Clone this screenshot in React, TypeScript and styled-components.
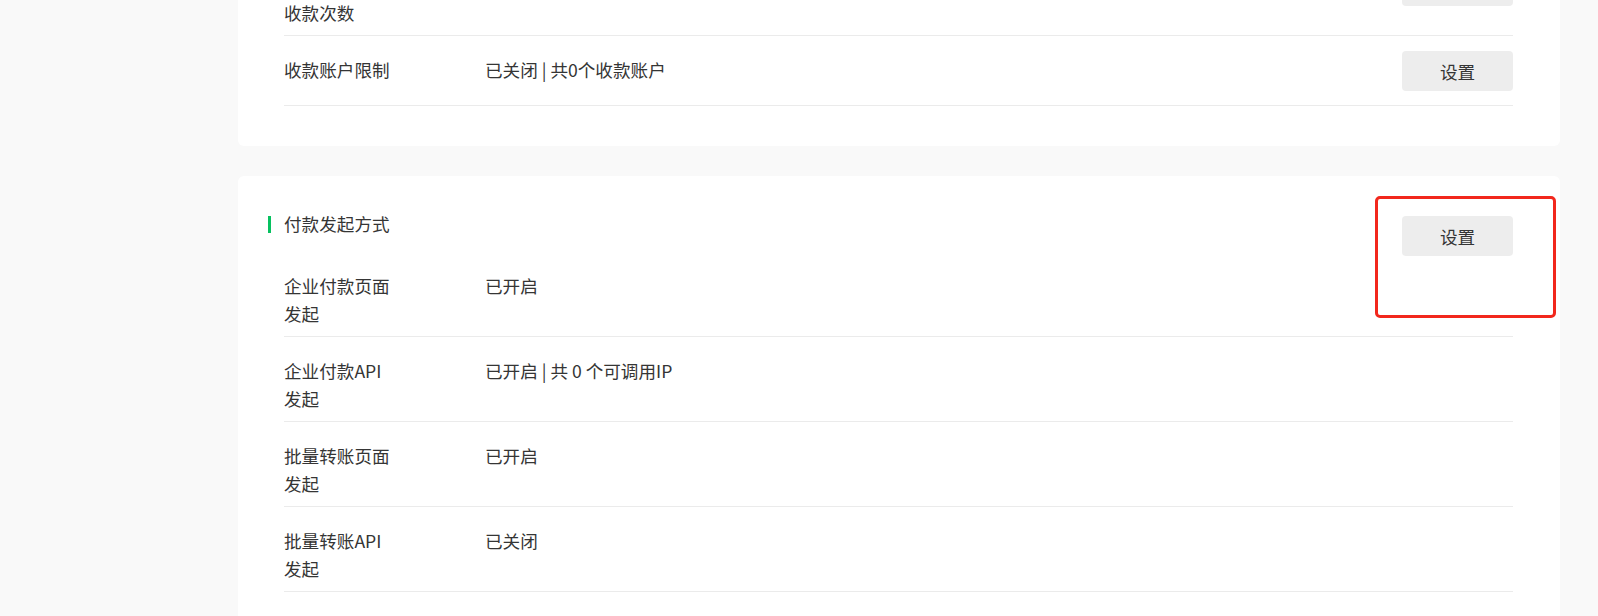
import React from "react";
import styled, { createGlobalStyle } from "styled-components";

const GlobalStyle = createGlobalStyle`
  html, body {
    margin: 0;
    padding: 0;
    background: #f9f9f9;
  }
  body {
    font-family: "Noto Sans CJK SC", "Noto Sans", sans-serif;
    font-size: 17.6px;
    color: #353535;
    overflow: hidden;
  }
`;

const Viewport = styled.div`
  height: 616px;
  overflow: hidden;
`;

// page is scrolled: the first card starts above the window
const Main = styled.main`
  display: flex;
  flex-direction: column;
  gap: 30px;
  margin-top: -49px;
  padding: 0 38px 0 238px;
`;

const Card = styled.section<{ $scrolled?: boolean }>`
  position: relative;
  background: #fff;
  border-radius: 6px;
  padding: ${(p) => (p.$scrolled ? "0" : "34px")} 47px 40px 46px;
`;

const Header = styled.div`
  display: flex;
  justify-content: space-between;
  align-items: flex-start;
  height: 42px;
`;

const Title = styled.h3`
  display: flex;
  align-items: center;
  gap: 13px;
  margin: 0 0 0 -16px;
  font-size: 17.6px;
  font-weight: normal;
  line-height: 28px;

  &::before {
    content: "";
    width: 3px;
    height: 17px;
    background: #07c160;
  }
`;

const Row = styled.div`
  display: flex;
  align-items: flex-start;
  padding: 17px 0 8px;
  border-bottom: 1px solid #ebebeb;
`;

const Label = styled.div`
  flex: 0 0 108px;
  padding-top: 3px;
  line-height: 28px;
`;

const Value = styled.div`
  flex: 1;
  margin-left: 93px;
  padding-top: 3px;
  line-height: 28px;
`;

const Button = styled.button<{ $inRow?: boolean }>`
  flex: 0 0 auto;
  width: 111px;
  height: 40px;
  margin: ${(p) => (p.$inRow ? "-2px 0 6px" : "6px 0 0")};
  border: none;
  border-radius: 4px;
  background: #ededed;
  color: #353535;
  font-family: inherit;
  font-size: 17.6px;
  cursor: pointer;
`;

const Highlight = styled.div`
  position: absolute;
  top: 20px;
  right: 4px;
  width: 181px;
  height: 122px;
  box-sizing: border-box;
  border: 3px solid #f2281d;
  border-radius: 5px;
  pointer-events: none;
`;

type Item = { label: string; value: string; action?: boolean };

const receiveItems: Item[] = [
  { label: "单日单个用户收款次数", value: "", action: true },
  { label: "收款账户限制", value: "已关闭 | 共0个收款账户", action: true },
];

const payItems: Item[] = [
  { label: "企业付款页面发起", value: "已开启" },
  { label: "企业付款API发起", value: "已开启 | 共 0 个可调用IP" },
  { label: "批量转账页面发起", value: "已开启" },
  { label: "批量转账API发起", value: "已关闭" },
];

const SettingRow = ({ label, value, action }: Item) => (
  <Row>
    <Label>{label}</Label>
    <Value>{value}</Value>
    {action && <Button $inRow>设置</Button>}
  </Row>
);

export default function App() {
  return (
    <>
      <GlobalStyle />
      <Viewport>
        <Main>
          <Card $scrolled>
            {receiveItems.map((it) => (
              <SettingRow key={it.label} {...it} />
            ))}
          </Card>

          <Card>
            <Header>
              <Title>付款发起方式</Title>
              <Button>设置</Button>
            </Header>
            {payItems.map((it) => (
              <SettingRow key={it.label} {...it} />
            ))}
            <Highlight />
          </Card>
        </Main>
      </Viewport>
    </>
  );
}
